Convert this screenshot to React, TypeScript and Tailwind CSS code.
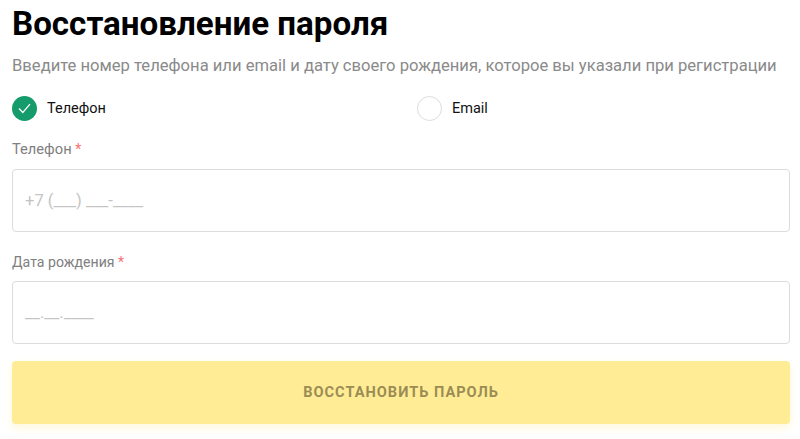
export default function App() {
  return (
    <div className="h-[439px] w-[800px] overflow-hidden bg-white pl-3 pr-[10px] font-['Roboto',sans-serif]">
      <h1 className="pt-[2px] text-[33.15px] font-bold leading-[44px] text-black">Восстановление пароля</h1>
      <p className="mt-[10px] whitespace-nowrap text-[16.6px] leading-[20px] text-[#8a8a8a]">
        Введите номер телефона или email и дату своего рождения, которое вы указали при регистрации
      </p>

      <div className="mt-[19px] flex h-[26px]">
        <div className="flex w-[405px] items-center gap-[10px]">
          <span className="flex h-[25px] w-[25px] items-center justify-center rounded-full bg-[#169b6b]">
            <svg width="13" height="11" viewBox="0 0 13 11" fill="none">
              <path d="M1 5.5L4.8 9.5L12 1.2" stroke="#fff" strokeWidth="1.2" />
            </svg>
          </span>
          <span className="pt-[1px] text-[14.5px] text-[#111]">Телефон</span>
        </div>
        <div className="flex items-center gap-[10px]">
          <span className="h-[25px] w-[25px] rounded-full border border-[#dddddd]" />
          <span className="pt-[1px] text-[14.5px] text-[#111]">Email</span>
        </div>
      </div>

      <label className="mt-[18px] block text-[14.7px] leading-[20px] text-[#808080]">
        Телефон <span className="text-[14px] text-[#f87171]">*</span>
      </label>
      <div className="mt-[10px] flex h-[63px] items-center rounded-[4px] border border-[#dcdcdc] px-3 pt-[2px] text-[16.6px] text-[#c4c4c4]">
        +7 (___) ___-____
      </div>

      <label className="mt-[20px] block text-[14.1px] leading-[20px] text-[#808080]">
        Дата рождения <span className="text-[14px] text-[#f87171]">*</span>
      </label>
      <div className="mt-[9px] flex h-[63px] items-center rounded-[4px] border border-[#dcdcdc] px-3 pt-[2px] text-[16.6px] text-[#c4c4c4]">
        __.__.____
      </div>

      <button className="mt-[17px] flex h-[63px] w-full items-center justify-center rounded-[4px] bg-[#ffec94] pt-[1px] text-[14.6px] font-bold tracking-[1px] text-[#9b8c55] shadow-[0_4px_8px_rgba(255,236,148,0.35)]">
        ВОССТАНОВИТЬ ПАРОЛЬ
      </button>
    </div>
  );
}
